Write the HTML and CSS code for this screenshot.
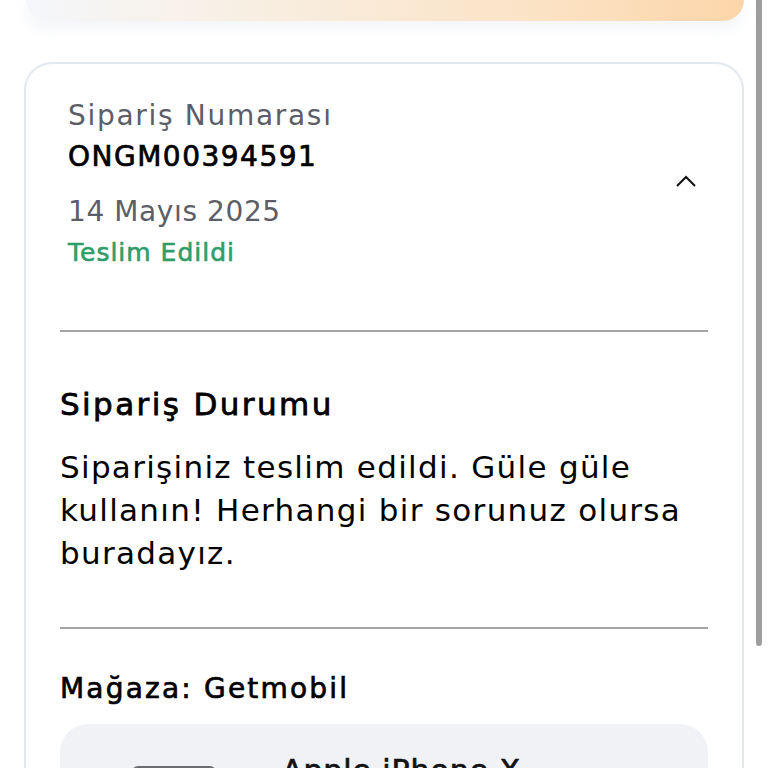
FILE: index.html
```html
<!DOCTYPE html>
<html lang="tr">
<head>
<meta charset="utf-8">
<link rel="stylesheet" href="styles.css">
</head>
<body>
<div class="page">
  <div class="banner"></div>
  <section class="order-card">
    <header class="order-head">
      <div class="order-meta">
        <div class="label">Sipariş Numarası</div>
        <div class="order-no">ONGM00394591</div>
        <div class="date">14 Mayıs 2025</div>
        <div class="status">Teslim Edildi</div>
      </div>
      <svg class="chevron" width="20" height="12" viewBox="0 0 20 12"><path d="M1 11 L10 2 L19 11" fill="none" stroke="#111" stroke-width="2"/></svg>
    </header>
    <hr class="divider">
    <div class="status-block">
      <h2 class="block-title">Sipariş Durumu</h2>
      <p class="block-text">Siparişiniz teslim edildi. Güle güle kullanın! Herhangi bir sorunuz olursa buradayız.</p>
    </div>
    <hr class="divider">
    <div class="store">Mağaza: Getmobil</div>
    <div class="product">
      <div class="thumb"></div>
      <div class="product-name">Apple iPhone X</div>
    </div>
  </section>
</div>
<div class="scrollbar"></div>
</body>
</html>
```
FILE: styles.css
```css
html, body {
  margin: 0;
  padding: 0;
  background: #ffffff;
  overflow: hidden;
  height: 768px;
}
body {
  font-family: "DejaVu Sans", "Noto Sans", sans-serif;
  color: #111;
  position: relative;
}
.page {
  width: 720px;
  margin-left: 24px;
}
.banner {
  height: 21px;
  margin-left: 2px;
  border-radius: 0 0 22px 22px;
  background: linear-gradient(90deg, #f5f7fb 0%, #f8efe3 30%, #fbe3c6 70%, #fcd6aa 100%);
  box-shadow: 0 8px 14px rgba(220, 225, 235, 0.35);
}
.order-card {
  margin-top: 41px;
  border: 2px solid #e3e7ee;
  border-bottom: none;
  border-radius: 28px 28px 0 0;
  padding: 30px 34px 0 34px;
  height: 760px;
  box-sizing: border-box;
}
.order-head {
  display: flex;
  align-items: center;
  justify-content: space-between;
  padding: 0 12px 0 8px;
}
.order-meta {
  display: flex;
  flex-direction: column;
}
.label {
  font-size: 28px;
  line-height: 44px;
  letter-spacing: 1.7px;
  color: #5b5e68;
}
.order-no {
  font-size: 28px;
  line-height: 38px;
  letter-spacing: 1.5px;
  -webkit-text-stroke: 0.7px currentColor;
  color: #000;
}
.date {
  font-size: 28px;
  line-height: 56px;
  letter-spacing: 0.6px;
  color: #5b5e68;
  padding-top: 8px;
}
.status {
  font-size: 25px;
  line-height: 26px;
  letter-spacing: 1px;
  -webkit-text-stroke: 0.6px currentColor;
  color: #2f9d69;
}
.chevron {
  margin-top: 2px;
}
.divider {
  border: none;
  height: 2px;
  background: #a3a4a6;
  margin: 0;
}
.order-head + .divider {
  margin-top: 64px;
}
.status-block {
  padding: 52px 0 52px 0;
}
.block-title {
  margin: 0;
  font-size: 31px;
  line-height: 40px;
  font-weight: 400;
  letter-spacing: 2.4px;
  -webkit-text-stroke: 0.8px currentColor;
  color: #000;
}
.block-text {
  margin: 22px 0 0 0;
  font-size: 31px;
  line-height: 43px;
  letter-spacing: 1.3px;
  color: #000;
}
.store {
  margin-top: 40px;
  font-size: 28px;
  line-height: 40px;
  letter-spacing: 2.2px;
  -webkit-text-stroke: 0.7px currentColor;
  color: #000;
}
.product {
  margin-top: 15px;
  background: #f0f2f6;
  border-radius: 28px;
  height: 200px;
  display: flex;
  align-items: flex-start;
  padding: 27px 0 0 72px;
  box-sizing: border-box;
}
.thumb {
  width: 84px;
  height: 60px;
  margin-top: 15px;
  border-radius: 6px;
  border-top: 3px solid #6b6d72;
  background: #e2e3e6;
}
.product-name {
  margin-left: 66px;
  font-size: 30px;
  line-height: 40px;
  letter-spacing: 0.9px;
  -webkit-text-stroke: 0.7px currentColor;
}
.scrollbar {
  position: absolute;
  top: 0;
  left: 756px;
  width: 6px;
  height: 646px;
  background: #9e9e9e;
  border-radius: 0 0 3px 3px;
}
```
